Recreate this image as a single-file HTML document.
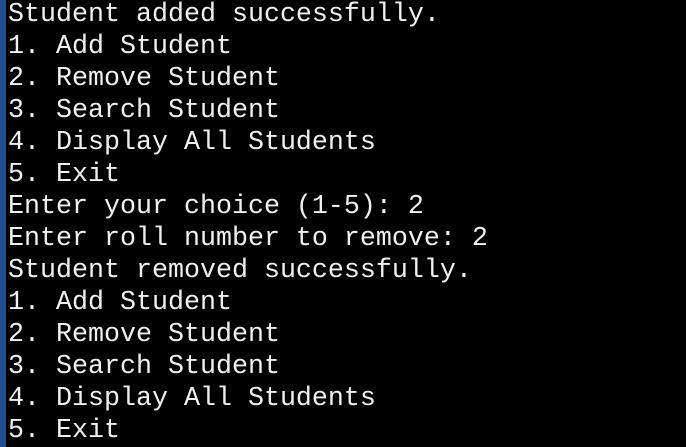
<!DOCTYPE html>
<html><head><style>
html,body{margin:0;padding:0;width:686px;height:447px;overflow:hidden;background:#000;}
.bar{position:absolute;left:0;top:0;width:6px;height:447px;background:#1e4f8c;}
pre{position:absolute;left:8px;top:-1px;margin:0;font-family:"Liberation Mono",monospace;font-size:26.67px;line-height:32px;color:#f0f0f0;}
</style></head><body><div class="bar"></div><pre>Student added successfully.
1. Add Student
2. Remove Student
3. Search Student
4. Display All Students
5. Exit
Enter your choice (1-5): 2
Enter roll number to remove: 2
Student removed successfully.
1. Add Student
2. Remove Student
3. Search Student
4. Display All Students
5. Exit</pre></body></html>
